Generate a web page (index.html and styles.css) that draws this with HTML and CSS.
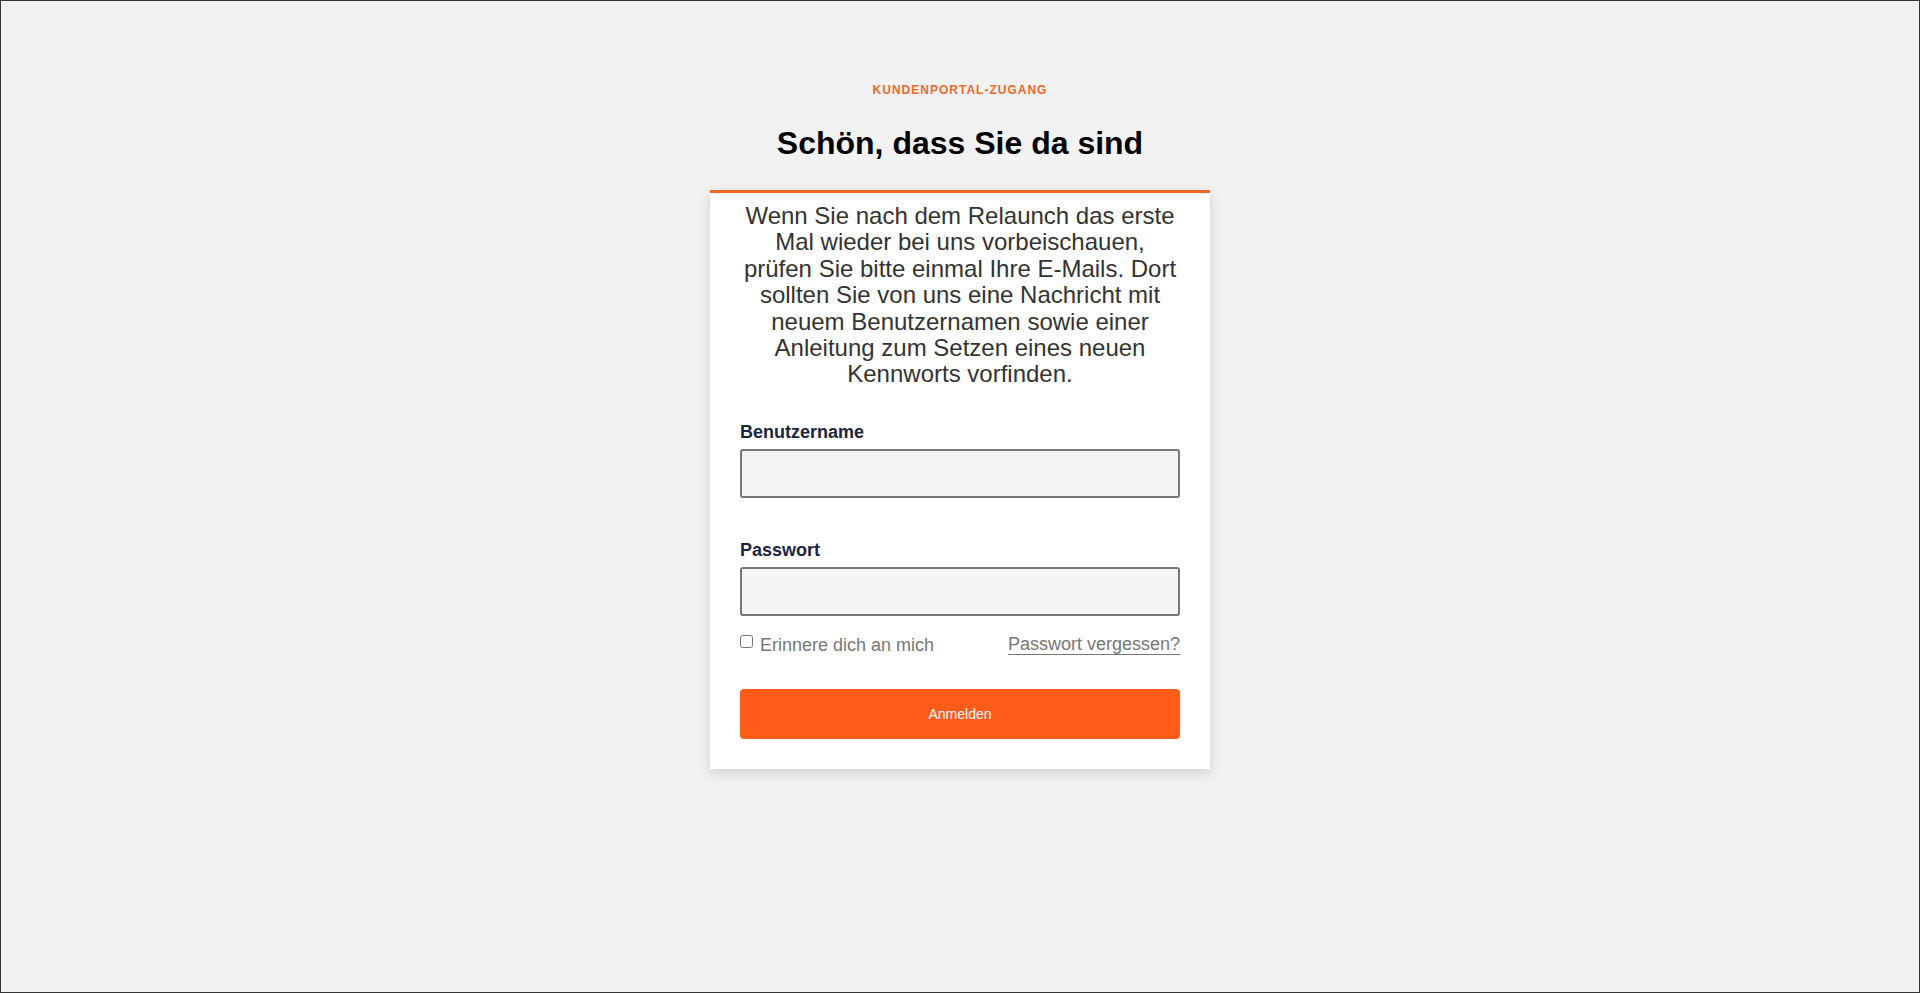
FILE: index.html
```html
<!DOCTYPE html>
<html lang="de">
<head>
  <meta charset="UTF-8">
  <meta name="viewport" content="width=device-width, initial-scale=1.0">
  <title>Kundenportal - Anmelden</title>
  <link rel="stylesheet" href="styles.css">
</head>
<body>
  <div id="page">
    <p class="kicker">Kundenportal-Zugang</p>
    <h1>Schön, dass Sie da sind</h1>

    <!-- Login Card -->
    <div id="loginCard">
      <p class="intro">Wenn Sie nach dem Relaunch das erste Mal wieder bei uns vorbeischauen, prüfen Sie bitte einmal Ihre E-Mails. Dort sollten Sie von uns eine Nachricht mit neuem Benutzernamen sowie einer Anleitung zum Setzen eines neuen Kennworts vorfinden.</p>

      <form id="loginForm" onsubmit="return false;">
        <div class="field">
          <label for="username">Benutzername</label>
          <input type="text" id="username" name="username">
        </div>

        <div class="field">
          <label for="password">Passwort</label>
          <input type="password" id="password" name="password">
        </div>

        <div class="options">
          <label class="remember"><input type="checkbox" name="remember"> Erinnere dich an mich</label>
          <a href="#" class="forgot">Passwort vergessen?</a>
        </div>

        <button type="submit" class="submit">Anmelden</button>
      </form>
    </div>
  </div>
</body>
</html>
```

FILE: styles.css
```css
/* General Reset */
* {
  box-sizing: border-box;
  margin: 0;
  padding: 0;
}

body {
  font-family: "Liberation Sans", Arial, sans-serif;
  background: #f2f2f2;
  color: #333;
}

#page {
  height: 100vh;
  border: 1px solid #333;
  display: flex;
  flex-direction: column;
  align-items: center;
  padding-top: 82px;
  text-align: center;
}

.kicker {
  font-size: 12px;
  font-weight: bold;
  letter-spacing: 1px;
  text-transform: uppercase;
  color: #ee6a2b;
}

h1 {
  font-size: 32px;
  color: #000;
  margin-top: 28px;
}

/* Login Card */
#loginCard {
  width: 500px;
  margin-top: 28px;
  padding: 10px 30px 30px;
  background: white;
  border-top: 3px solid #f26522;
  box-shadow: 0px 4px 12px rgba(0, 0, 0, 0.15);
}

.intro {
  font-size: 24px;
  line-height: 1.1;
}

#loginForm {
  margin-top: 34px;
  text-align: left;
}

.field {
  margin-bottom: 42px;
}

.field label {
  display: block;
  font-size: 18px;
  font-weight: bold;
  color: #1b2540;
  margin-bottom: 6px;
}

.field input {
  width: 100%;
  height: 49px;
  border: 2px solid #777;
  border-radius: 3px;
  background: #f4f4f4;
  font-size: 16px;
  padding: 0 10px;
}

#loginForm .field:nth-child(2) {
  margin-bottom: 19px;
}

.options {
  display: flex;
  justify-content: space-between;
  align-items: flex-start;
  font-size: 18px;
  color: #777;
}

.remember input {
  width: 13px;
  height: 13px;
  margin: 0 2px 0 0;
  vertical-align: top;
}

.forgot {
  line-height: 19px;
  color: #777;
  text-decoration: none;
  border-bottom: 1px solid #777;
}

button.submit {
  display: block;
  width: 100%;
  height: 50px;
  margin-top: 33px;
  border: none;
  border-radius: 4px;
  background-color: #ff5c1a;
  color: white;
  font-family: "Liberation Sans", Arial, sans-serif;
  font-size: 14px;
  cursor: pointer;
}
```
